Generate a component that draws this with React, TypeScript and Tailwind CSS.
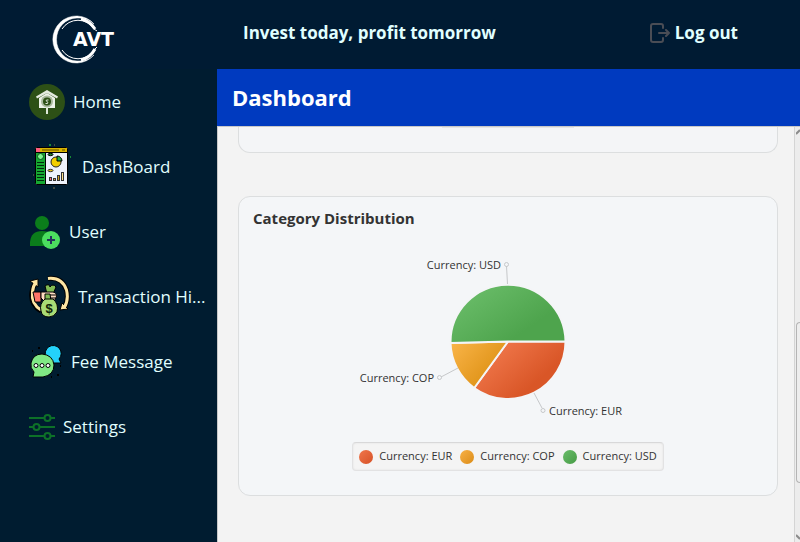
import type { ReactNode } from "react";

function Logo() {
  return (
    <svg width="72" height="50" viewBox="0 0 72 50" role="img" aria-label="AVT">
      <path d="M42 10 A23.500 23.500 0 1 0 42 41 A22 22.500 0 0 1 25 47 A20.500 21.500 0 0 1 25 4 A22 22.500 0 0 1 42 10 Z" fill="#fff" stroke="#fff" strokeWidth="0.500" />
      <path d="M10 15 A19 19 0 0 1 42 15 L45 17 M10 36 A19 19 0 0 0 42 36 L45 33" fill="none" stroke="#fff" strokeWidth="1" />
      <path d="M29 5 Q38 7 43 15 M29 46 Q38 44 43 35" fill="none" stroke="#fff" strokeWidth="3" />
      <text x="21" y="32" fontFamily="'DejaVu Sans', sans-serif" fontSize="19" fontWeight="700" fill="#fff" stroke="#001b33" strokeWidth="2" paintOrder="stroke">AVT</text>
    </svg>
  );
}

function HomeIcon() {
  return (
    <svg width="36" height="36" viewBox="0 0 36 36" aria-hidden="true">
      <circle cx="18" cy="18" r="18" fill="#2d5016" />
      <path d="M18 6 L29 12.500 L28 14.500 L18 9 L8 14.500 L7 12.500 Z" fill="#e4eadf" />
      <path d="M18 9 L26 14 V24 H10 V14 Z" fill="#eef2ea" />
      <circle cx="18" cy="17.500" r="6" fill="#a9b99d" />
      <circle cx="18" cy="17.500" r="4" fill="#2d5016" />
      <path d="M19.500 16 H17.500 Q16.500 17 18 17.500 Q19.500 18 18.500 19.500 H16.500" fill="none" stroke="#dfe8d8" strokeWidth="1" />
      <path d="M18 24 V30" stroke="#dfe8d8" strokeWidth="2" />
    </svg>
  );
}

function DashboardIcon() {
  return (
    <svg width="45" height="46" viewBox="0 0 45 46" aria-hidden="true">
      <rect x="6.500" y="3.500" width="32" height="37" rx="1" fill="#eef2fb" stroke="#000" />
      <rect x="7" y="4" width="4" height="4" fill="#ff5d7d" />
      <rect x="11" y="4" width="27" height="4" fill="#d8b400" />
      <path d="M13 6 H30 M33 6 H36" stroke="#5d4d00" />
      <path d="M7 8.500 H38" stroke="#000" />
      <rect x="7" y="9" width="9" height="31" fill="#16a832" />
      <path d="M16.500 9 V40" stroke="#000" />
      <circle cx="11.500" cy="12.500" r="3" fill="#7ff58c" stroke="#0a4f1a" />
      <path d="M8 18.500 H15 M8 21.500 H15 M8 24.500 H15 M8 27.500 H15 M8 30.500 H15 M8 33.500 H15 M8 36.500 H15" stroke="#002b0b" strokeWidth="1" />
      <ellipse cx="21.500" cy="10.500" rx="2.500" ry="1.200" fill="#18792c" stroke="#000" />
      <ellipse cx="21.500" cy="26.500" rx="2.500" ry="1.200" fill="#e0bc20" stroke="#333" />
      <circle cx="27" cy="18" r="5" fill="#f3cf00" stroke="#222" />
      <path d="M28 17 V12 A5 5 0 0 1 33 17 Z" fill="#24ad43" stroke="#000" />
      <rect x="20.500" y="33.500" width="2" height="3" fill="#ff6b7c" stroke="#333" />
      <rect x="24.500" y="34.500" width="2" height="2" fill="#e0a43a" stroke="#333" />
      <rect x="28.500" y="31.500" width="2" height="5" fill="#c89a20" stroke="#333" />
      <rect x="32.500" y="28.500" width="2" height="8" fill="#ffe08b" stroke="#333" />
      <path d="M20 1 H22 M41 13 H42" stroke="#168a35" strokeWidth="2" />
      <path d="M25 1 H26 M4 31 H5 M24 44 H26" stroke="#7f7250" />
    </svg>
  );
}

function UserIcon() {
  return (
    <svg width="32" height="34" viewBox="0 0 32 34" aria-hidden="true">
      <circle cx="13" cy="8" r="7" fill="#0b7d1b" />
      <path d="M1 31 V27 Q2 16 13 16 Q25 16 25 27 V31 Z" fill="#0b7d1b" />
      <circle cx="22" cy="25" r="9" fill="#4cde5f" />
      <path d="M18 25 H26 M22 21 V29" stroke="#25355c" strokeWidth="2" />
    </svg>
  );
}

function TransactionIcon() {
  return (
    <svg width="41" height="44" viewBox="0 0 41 44" aria-hidden="true">
      <path d="M12 36 Q1 29 3 17 Q4 11 7 7" fill="none" stroke="#000" strokeWidth="5" />
      <path d="M19 3.500 Q33 2 37.500 15 Q40 25 35 33" fill="none" stroke="#000" strokeWidth="5" />
      <path d="M1 6 L9 4 L9 12 Z M33 28 L39 34 L31 35 Z" fill="#ffe6a4" stroke="#000" />
      <path d="M12 35 Q2 29 3.500 17 Q4 11 7 7" fill="none" stroke="#ffe6a4" strokeWidth="3" />
      <path d="M19 3.500 Q33 2 37.500 15 Q40 25 35 33" fill="none" stroke="#ffe6a4" strokeWidth="3" />
      <path d="M4 17 H12 V27 H6 Z" fill="#ff7468" stroke="#000" />
      <path d="M16 11 Q20 8 21 12 Q24 8 27 12 L24 19 H18 Z" fill="#83bd56" stroke="#000" />
      <path d="M12 17 H24 Q29 18 27 23 L25 26 H15 L12 23 Z" fill="#ffdcc2" stroke="#000" />
      <path d="M21 20 H27 M21 23 H27" stroke="#000" />
      <path d="M16 19 H21 L22 26 H16 Z" fill="#83bd56" stroke="#000" />
      <path d="M16 24 H24 Q30 29 28 37 Q25 42 20 42 Q13 42 12 36 Q10 29 16 24 Z" fill="#a9dc76" stroke="#000" />
      <text x="20" y="38" textAnchor="middle" fontFamily="'Liberation Sans', sans-serif" fontSize="13" fontWeight="700" fill="#112608">$</text>
    </svg>
  );
}

function MessageIcon() {
  return (
    <svg width="34" height="34" viewBox="0 0 34 34" aria-hidden="true">
      <path d="M17 12 A8 8 0 1 1 30 14 L32 18 H24 Z" fill="#24d2fa" stroke="#000" />
      <path d="M4 32 L5 27 Q1 23 2 18 Q4 9 13 9 Q24 10 25 20 Q25 30 14 32 Z" fill="#80e884" stroke="#000" />
      <g fill="#fff" stroke="#000">
        <circle cx="7" cy="20.500" r="2" />
        <circle cx="13" cy="20.500" r="2" />
        <circle cx="19" cy="20.500" r="2" />
      </g>
      <path d="M3 6 H4 M9 3 H11 M31 21 H32 M28 30 H30 M22 32 H23" stroke="#000" strokeWidth="2" />
    </svg>
  );
}

function SettingsIcon() {
  return (
    <svg width="26" height="26" viewBox="0 0 26 26" fill="none" stroke="#0d7128" strokeWidth="2" aria-hidden="true">
      <path d="M0 4 H15 M22 4 H26 M0 13 H4 M11 13 H26 M0 22 H15 M22 22 H26" />
      <circle cx="18.500" cy="4" r="3" />
      <circle cx="7.500" cy="13" r="3" />
      <circle cx="18.500" cy="22" r="3" />
    </svg>
  );
}

function LogoutIcon() {
  return (
    <svg width="20" height="20" viewBox="0 0 20 20" fill="none" stroke="#4a4d55" strokeWidth="2" strokeLinecap="round" strokeLinejoin="round" aria-hidden="true">
      <path d="M13 5 V3 Q13 1 11 1 H3 Q1 1 1 3 V17 Q1 19 3 19 H11 Q13 19 13 17 V15 M9 10 H19 M16 7 L19 10 L16 13" />
    </svg>
  );
}

const navItems: { label: string; icon: ReactNode }[] = [
  { label: "Home", icon: <HomeIcon /> },
  { label: "DashBoard", icon: <DashboardIcon /> },
  { label: "User", icon: <UserIcon /> },
  { label: "Transaction Hi...", icon: <TransactionIcon /> },
  { label: "Fee Message", icon: <MessageIcon /> },
  { label: "Settings", icon: <SettingsIcon /> },
];

const legend = [
  { label: "Currency: EUR", dot: "bg-linear-to-br from-[#f0764b] to-[#d65126]" },
  { label: "Currency: COP", dot: "bg-linear-to-br from-[#f8b145] to-[#db8c12]" },
  { label: "Currency: USD", dot: "bg-linear-to-br from-[#6abd6a] to-[#469b45]" },
];

function PieChart() {
  return (
    <svg width="320" height="180" viewBox="0 0 320 180" role="img" aria-label="Category distribution pie chart" className="text-[11px]">
      <defs>
        <linearGradient id="usd" gradientUnits="userSpaceOnUse" x1="125" y1="40" x2="160" y2="92">
          <stop offset="0" stopColor="#68bb67" />
          <stop offset="1" stopColor="#4ea44d" />
        </linearGradient>
        <linearGradient id="cop" gradientUnits="userSpaceOnUse" x1="105" y1="92" x2="142" y2="125">
          <stop offset="0" stopColor="#f9b448" />
          <stop offset="1" stopColor="#e09419" />
        </linearGradient>
        <linearGradient id="eur" gradientUnits="userSpaceOnUse" x1="145" y1="90" x2="185" y2="135">
          <stop offset="0" stopColor="#f27a4e" />
          <stop offset="1" stopColor="#d95627" />
        </linearGradient>
      </defs>
      <g stroke="#f4f5f7" strokeWidth="2" strokeLinejoin="round">
        <path d="M160 91.500 H217.500 A57.500 57.500 0 0 1 126.200 138 Z" fill="url(#eur)" />
        <path d="M160 91.500 L126.200 138 A57.500 57.500 0 0 1 102.500 93 Z" fill="url(#cop)" />
        <path d="M160 91.500 L102.500 93 A57.500 57.500 0 0 1 217.500 91.500 Z" fill="url(#usd)" />
      </g>
      <g fill="none" stroke="#c6c8ca">
        <path d="M159.500 34 L158.500 16 M110 118 L93 127 M186 143 L194 158" />
        <circle cx="158.500" cy="14.500" r="2" />
        <circle cx="91.500" cy="127.500" r="2" />
        <circle cx="195" cy="160.500" r="2" />
      </g>
      <g fill="#333">
        <text x="153" y="19" textAnchor="end">Currency: USD</text>
        <text x="86" y="132" textAnchor="end">Currency: COP</text>
        <text x="201" y="165">Currency: EUR</text>
      </g>
    </svg>
  );
}

export default function App() {
  return (
    <div className="flex h-screen flex-col overflow-hidden bg-[#001c30] font-['Open_Sans','Noto_Sans',sans-serif]">
      <header className="flex h-[69px] shrink-0 items-center bg-[#001b33] text-[#e0ffff]">
        <div className="w-[243px] shrink-0 pt-2 pl-[52px]">
          <Logo />
        </div>
        <p className="flex-1 pb-1 text-[17px] font-bold">Invest today, profit tomorrow</p>
        <button type="button" className="mr-[62px] flex items-center gap-[5px] pb-1 text-[17px] font-bold">
          <LogoutIcon />
          Log out
        </button>
      </header>
      <div className="flex min-h-0 flex-1">
        <nav className="flex w-[217px] shrink-0 flex-col">
          {navItems.map((item) => (
            <a key={item.label} href="#" className="flex h-[65px] items-center gap-2 pl-[29px] text-[17px] whitespace-nowrap text-[#e0ffff]">
              {item.icon}
              {item.label}
            </a>
          ))}
        </nav>
        <main className="flex min-w-0 flex-1 flex-col">
          <h1 className="flex h-[57px] shrink-0 items-center bg-[#003abf] pl-[15px] text-[22px] font-bold text-white">Dashboard</h1>
          <div className="flex min-h-0 flex-1 border-t border-l border-[#c8c8c8] bg-[#f3f3f3]">
            <div className="min-w-0 flex-1 px-5 pr-4">
              <div className="flex h-[26px] justify-center rounded-b-xl border border-t-0 border-[#dcdedf] bg-[#f4f5f7]">
                <div className="h-px w-[132px] bg-[#e4e5e6]" />
              </div>
              <section className="mt-[43px] flex h-[300px] flex-col items-center rounded-xl border border-[#dcdedf] bg-[#f4f6f8]">
                <h2 className="self-stretch pt-2 pl-3.5 text-[15px] leading-[26px] font-bold text-[#333]">Category Distribution</h2>
                <div className="mt-[19px]">
                  <PieChart />
                </div>
                <ul className="mt-3 flex h-[29px] items-center gap-2 rounded border border-[#e2e2e3] border-t-[#d8d8d9] bg-[#f4f4f4] px-1.5 text-[11px] text-[#333] shadow-[inset_0_0_2px_#ddd]">
                  {legend.map((item) => (
                    <li key={item.label} className="flex items-center gap-1.5 whitespace-nowrap">
                      <span className={`size-3.5 rounded-full ${item.dot}`} />
                      {item.label}
                    </li>
                  ))}
                </ul>
              </section>
            </div>
            <div className="flex w-[6px] shrink-0 flex-col overflow-hidden border-l border-[#d4d4d4] bg-[#ececec] pl-px" aria-hidden="true">
              <svg width="4" height="12" viewBox="0 0 4 12" fill="none" stroke="#8b8b8b" strokeWidth="2">
                <path d="M0 7 L4 3" />
              </svg>
              <div className="flex-[184]" />
              <div className="flex-[160] rounded-l border border-r-0 border-[#b4b4b4] bg-[#ededed]" />
              <div className="flex-[47]" />
              <svg width="4" height="12" viewBox="0 0 4 12" fill="none" stroke="#8b8b8b" strokeWidth="2">
                <path d="M0 5 L4 9" />
              </svg>
            </div>
          </div>
        </main>
      </div>
    </div>
  );
}
